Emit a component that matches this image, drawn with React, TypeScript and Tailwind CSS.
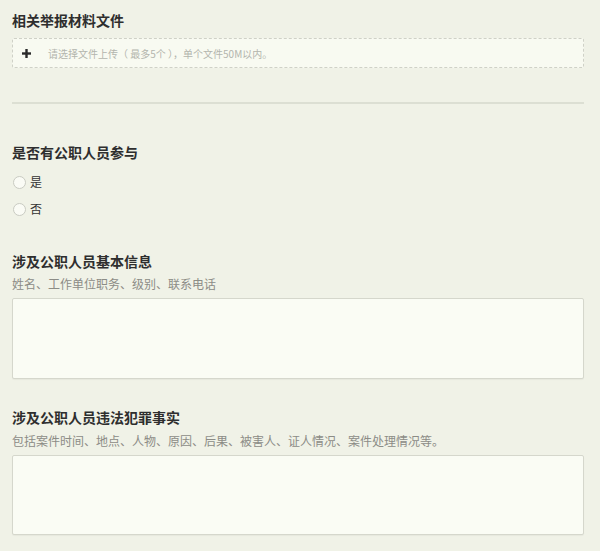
const font = { fontFamily: '"Noto Sans CJK SC", "Noto Sans", sans-serif' }

function Title({ children }: { children: React.ReactNode }) {
  return <h3 className="text-[14px] leading-[20px] font-bold text-[#2e2e2e]">{children}</h3>
}

function Radio({ label }: { label: string }) {
  return (
    <label className="flex items-center gap-[4px] h-[20px]">
      <span className="w-[13px] h-[13px] rounded-full border border-[#c9cbc2] bg-[#fafbf5] ml-[1px]" />
      <span className="text-[12px] text-[#333]">{label}</span>
    </label>
  )
}

export default function App() {
  return (
    <div lang="zh-CN" className="w-[600px] h-[551px] bg-[#f0f2e7] pl-3 pr-4 pt-[10px] overflow-hidden" style={font}>
      {/* upload */}
      <Title>相关举报材料文件</Title>
      <div className="mt-2 h-[30px] border border-dashed border-[#cfd1c7] bg-[#f8faf1] rounded-[2px] flex items-center pl-[9px]">
        <svg width="9" height="9" viewBox="0 0 9 9" className="shrink-0">
          <rect x="3.3" y="0" width="2.4" height="9" fill="#2a2a2a" />
          <rect x="0" y="3.3" width="9" height="2.4" fill="#2a2a2a" />
        </svg>
        <span className="ml-[17px] text-[10px] text-[#b3b5ad] whitespace-pre">请选择文件上传（ 最多5个 ），单个文件50M以内。</span>
      </div>

      <div className="mt-[34px] h-[2px] bg-[#dcdfd3]" />

      {/* radios */}
      <div className="mt-[38px]">
        <Title>是否有公职人员参与</Title>
        <div className="mt-[10px] flex flex-col gap-[7px]">
          <Radio label="是" />
          <Radio label="否" />
        </div>
      </div>

      {/* basic info */}
      <div className="mt-[32px]">
        <Title>涉及公职人员基本信息</Title>
        <p className="mt-[5px] text-[12px] leading-[16px] text-[#8c8c86]">姓名、工作单位职务、级别、联系电话</p>
        <div className="mt-[6px] h-[81px] border border-[#d5d7cc] bg-[#fafcf4] rounded-[2px] shadow-[0_1px_1px_rgba(0,0,0,0.04)]" />
      </div>

      {/* facts */}
      <div className="mt-[28px]">
        <Title>涉及公职人员违法犯罪事实</Title>
        <p className="mt-[6px] text-[12px] leading-[16px] text-[#8c8c86]">
          包括案件时间、地点、人物、原因、后果、被害人、证人情况、案件处理情况等。
        </p>
        <div className="mt-[6px] h-[80px] border border-[#d5d7cc] bg-[#fafcf4] rounded-[2px] shadow-[0_1px_1px_rgba(0,0,0,0.04)]" />
      </div>
    </div>
  )
}
